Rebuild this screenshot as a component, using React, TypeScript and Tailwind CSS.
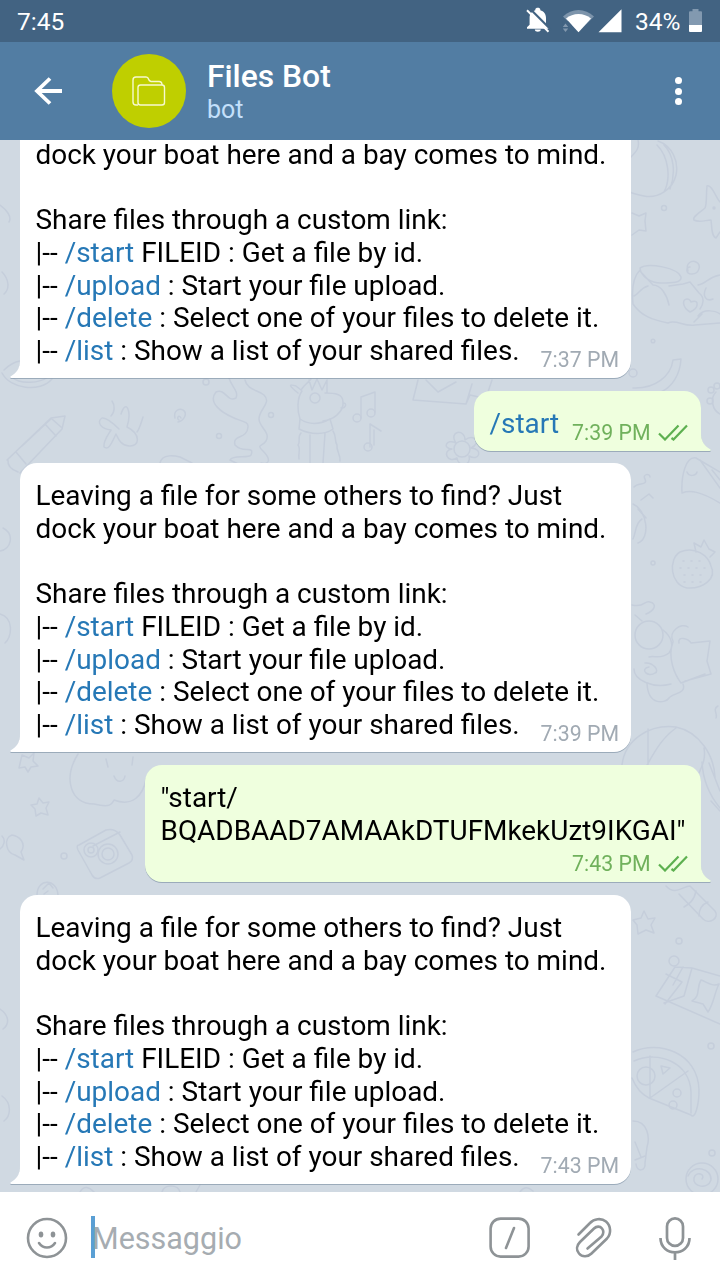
import type { ReactNode } from 'react';

function StatusBar() {
  return (
    <div className="flex h-[42px] items-center bg-[#426382] pr-[18px] pl-[17px] text-[24.5px] leading-none text-white">
      <span className="mt-[3px]">7:45</span>
      <div className="ml-auto flex items-center">
        <svg width="170" height="42" viewBox="525 0 170 42" className="-mr-[60px] shrink-0">
          <path d="M527 28.8v-1.6l2.6-2.5V18c0-4 2.2-7 5.7-7.8v-.8c0-2.200 5-2.200 5 0v.8c3.500.8 5.700 3.800 5.700 7.800v6.700l2.600 2.500v1.600z" fill="#fff" />
          <path d="M534.800 29.600h6c0 3-6 3-6 0z" fill="#fff" />
          <path d="M529.500 8.300l21.500 21.500" stroke="#426382" strokeWidth="2.200" />
          <path d="M527 10.200l21.500 21.500" stroke="#fff" strokeWidth="2" />
          <path d="M563 16.500c8.500-8.700 22.300-8.700 31 0L578.500 32z" fill="#7d94ab" />
          <path d="M563 21l7.500 0 4 11h-12z" fill="#426382" />
          <path d="M566 18.500c7-6 18-6 25 0L578.500 32.200z" fill="#fff" />
          <path d="M562.800 27l2.700-3.500 2.700 3.500zM562.800 28.600l2.700 3.500 2.700-3.500z" fill="#8298ae" />
          <path d="M598.500 32.300L621.500 9.300v23z" fill="#fff" />
        </svg>
        <span className="mt-[3px] mr-[9px] w-[45px]">34%</span>
        <svg width="13" height="23" viewBox="0 0 13 23" className="-mt-[1px]">
          <path d="M3.500 0h6v2.300H12q1 0 1 1V16H0V3.300q0-1 1-1h2.500z" fill="#8299b0" />
          <path d="M0 16h13v6q0 1-1 1H1q-1 0-1-1z" fill="#fff" />
        </svg>
      </div>
    </div>
  );
}

function Header() {
  return (
    <header className="flex h-[98px] items-center bg-[#527da3] pl-[33px]">
      <svg width="30" height="30" viewBox="0 0 30 30" fill="none" stroke="#fff" strokeWidth="3.800">
        <path d="M29 15H4M17 2.500L4 15l13 12.500" />
      </svg>
      <div className="ml-[49px] flex h-[74px] w-[74px] items-center justify-center rounded-full bg-[#bfcf00]">
        <svg width="34" height="30" viewBox="0 0 34 30" fill="none" stroke="#f7f9cf" strokeWidth="1.400" strokeLinejoin="round">
          <path d="M6 29H4q-3 0-3-3V4q0-3 3-3h10q2 0 2.500 2t2.500 2.500h8q3 0 3 3.500" />
          <rect x="6" y="9" width="26.500" height="20" rx="2.500" />
        </svg>
      </div>
      <div className="ml-[21px] flex flex-col">
        <h1 className="text-[31.800px] leading-[38px] font-medium text-white">Files Bot</h1>
        <p className="text-[25px] leading-[30px] text-[#c4e0fb]">bot</p>
      </div>
      <div className="mr-[38px] ml-auto flex flex-col gap-[3.500px]">
        <i className="h-[7px] w-[7px] rounded-full bg-white" />
        <i className="h-[7px] w-[7px] rounded-full bg-white" />
        <i className="h-[7px] w-[7px] rounded-full bg-white" />
      </div>
    </header>
  );
}

function Wallpaper() {
  return (
    <svg className="absolute inset-0" width="720" height="1052" viewBox="0 140 720 1052" fill="none" stroke="#c5cedb" strokeWidth="1.500" strokeLinecap="round" strokeLinejoin="round">
      <path d="M658 141c14 5 21 20 18 34s-18 24-32 21-14-3-17-8M657 145c12 12 14 34 7 47M630 158c6-6 10-10 8-18M664 145c10 10 12 28 6 44" />
      <path d="M707 186c5-2 9 12 13 16M707 186c-1 10 0 18-2 22-6 5-13 9-11 12 5 3 12 0 17 0 1 6 0 16 5 18l4-6" />
      <path d="M632 213l7 3 7-3-1 8 1 10-7-1-7 5" />
      <circle cx="664" cy="208" r="2.500" /><circle cx="714" cy="208" r="1" />
      <path d="M640 268c8-6 38 0 41 9 1 6-10 6-20 6-10 0-20-6-21-15zM640 270c-8 8-8 24-7 34 8 12 20 16 35 19M640 271l13 14c8 0 14 10 16 20M634 296c5-2 6-8 14-10M669 286l14-2 7-2 9 11c5 4 5 10 1 16M698 285c8-1 10-8 22-10M668 323c8-4 16 4 27 2l25-2M706 288c-4 8 0 14 7 11" />
      <path d="M690 312c-8-5-8-13-3-13 3 0 4 3 4 3s7-3 6 3c0 4-7 7-7 7zM698 316c6-8 18-5 22-2M694 322l8-8" />
      <path d="M688 271c-3-8 4-11 8-9 6 3 3 12-4 12s-6-7-2-7" />
      <circle cx="653" cy="341" r="1.800" /><circle cx="633" cy="373" r="4" />
      <path d="M633 388c22 1 38-12 40-28l8-1c-1 16-9 28-20 33M716 392c-6 6-4 18 4 22" />
      <circle cx="711" cy="390" r="3" /><circle cx="710" cy="401" r="3" /><circle cx="717" cy="386" r="3" />
      <path d="M2 373c8 16 38 20 50 6M12 377c8 8 28 6 36 0M4 370c4-4 10-8 16-9" />
      <path d="M7 460l44-42 14-2-3 13-42 44M16 452l10 12M45 424l11 12M52 419l9 8M22 446l30-28M8 460q-1 8 10 12" />
      <path d="M121 414c5-16 11-3 6 13 14 7 13 20 2 19-9-1-11-8-13-12-4 8-7 17-12 13-1-6 4-12 7-17-10-1-15-8-9-12 5-1 12 6 17 11M112 401c3 4 3 11-1 15M143 417c-2 6-3 11-6 15" />
      <path d="M175 418c-2-8 5-10 8-8 5 3 1 11-5 12M181 418c-2-4-5 0-2 2M160 463c2-10 16-7 20-6l12 6" />
      <path d="M229 378c2 8 10 13 7 20-9 5-10-10-20-6-9 11 7 21 16 25 7 4 17 4 16 10-1 13-16 7-13 18 8 9 20 0 16 10-3 4-18-1-21 5l8 4M245 380c2 10 13 10 19 15 8 8-5 14-5 24 0 8 12 13 7 22-4 6-10 3-3 10 8 8 7 14-2 12" />
      <circle cx="206" cy="382" r="3" /><circle cx="219" cy="436" r="2.500" /><circle cx="271" cy="415" r="2.500" />
      <path d="M298 393c-10-8-9-9-2-7l5 4c4-6 8-8 10-11M302 391c-5 7-5 20-2 28M309 380l3 10 5-11 5 11 5-10v12M325 393c10 0 18 1 18 9 1 10-10 18-20 19M343 403c5 0 2 6-2 5M300 419c9 6 19 6 30 0l3 10c-8 6-22 6-34 0zM301 433c-4 4 0 8-3 12 3 4 0 8 1 14M333 431c4 6 1 9 4 14-1 6 4 10 3 16M310 435v28M325 433l-2 30" />
      <circle cx="315" cy="398" r="5" /><path d="M361 397l14-5v20M361 397v21" /><circle cx="357" cy="418" r="4" /><circle cx="371" cy="413" r="4" /><path d="M370 424v23M370 424l11 7M374 430v15" /><circle cx="368" cy="447" r="4" />
      <path d="M418 380l-5 20 53 4 4-9 22 5M426 380l12 12 18-10M466 404l6-20M492 380l-6 18" />
      <circle cx="462" cy="449" r="8" /><path d="M456 443c-8-12 9-15 9-3 9-7 17 3 6 8 13 1 8 14-2 8 3 10-11 12-12 2-10 6-15-8-5-9-10 0-6-11 4-6" />
      <path d="M682 493c-1-18 4-37 14-35l24 14M682 493c8-3 18-2 38 10M687 472c2 5 9 4 10 0M700 460l20 28M712 470l8 10" />
      <path d="M634 487c4-5 14-1 11-8-3-5 5-6 5-2M641 500l8-6 4 4M633 504c14 6 18 34 5 39M638 509l8 9M642 519c-7 4-6 14-9 20" />
      <circle cx="653" cy="563" r="2" />
      <path d="M680 552c-12 7-10 33 7 36 17 1 30-10 24-22-3-11-16-20-31-14zM696 552l-2-9 7 4 3-7 5 9 6 3-5 5" />
      <g strokeDasharray="1 7"><path d="M683 561h20M680 568h28M684 575h24M684 582h18" /></g>
      <path d="M632 605c13 3 12-5 18-3 8 2 4 9-4 12M635 615l7 6" />
      <circle cx="649" cy="635" r="14" />
      <path d="M663 630c9 7 11 16 6 23-9 7-15 2-20 4M673 641c-5-9 8-19 15-14M673 642c-6 16 2 33 8 41l24-9M679 643c-2-8 10-4 12 0l19-2-3 20 4 13-26 7M671 684c-18 5-37-4-37-15M645 663c8-1 15 8 10 10-7 5-16-4-6-6" />
      <path d="M647 683c1 24 19 20 22 15s18-4 14-14" />
      <path d="M622 765c3-26 28-41 54-38 24 5 38 29 39 50M648 729v38M676 728c-14 10-21 23-29 37M704 748c2 11-2 18-5 25M718 706c-6 3 0 8-2 12" />
      <path d="M78 754c-15 24-8 50 16 50 17 4 18 0 20-4 18 7 29-4 32-21M106 759l2 8M133 757l-1 8M114 776c3 8 10 6 11 0" />
      <path d="M22 755l7 3 5-5-1 8 5 5-7 1-3 5-3-5-6 1z" />
      <path d="M39 798l4 5 6-1-3 6 2 7-7-2-5 3-1-7-4-4 6-1z" />
      <path d="M12 835c-9 3-6 18 3 20l9 5-3-8c6-9-2-16-9-17z" />
      <circle cx="64" cy="856" r="3" />
      <path d="M79 845l27-15q9-2 14 5l12 20q2 5-3 8l-29 15q-5 2-8-3l-14-25q-2-5 1-5zM93 846l27-14" />
      <circle cx="91" cy="850" r="7" /><circle cx="108" cy="854" r="10" /><circle cx="108" cy="854" r="6" /><circle cx="91" cy="850" r="3" />
      <path d="M37 895c0-17 20-17 21 0M43 889l6-6 4 5M44 894l4-3" />
      <path d="M709 763l11 28M711 801l9 10M702 762c1 20 8 34 18 46" />
      <path d="M666 886c9 10 17 0 24 0l25 25c5 7-6 14-12 8l-24-25" /><path d="M696 891c-2 10-7 13-12 16M708 902c-5 2-9 6-9 14" />
      <path d="M644 911l4 8 7-1-4 7 3 8-8-3-8 4-1-9-4-5 8-2z" />
      <circle cx="679" cy="941" r="3" /><circle cx="674" cy="961" r="5" /><circle cx="711" cy="1046" r="3" />
      <path d="M675 967l17 1 28 8M675 967l-19 29 64 28M666 974l16 8-17 22M692 968l-8 28-20 7M683 967l-10 18M701 980c-5 8 0 16-9 21l11 3 5 8c6-9 6-18 11-28-7 3-12-2-18-4z" />
      <path d="M633 1052c25-12 65 0 66 38 0 15-4 30-8 25l-42-17c-6-3-13-10-17-20M634 1061c25-11 56 2 57 31v21M650 1056v42l38-27" />
      <circle cx="646" cy="1076" r="9" /><path d="M661 1066l9 2-7 6z" /><circle cx="677" cy="1093" r="4" /><circle cx="673" cy="1105" r="4" />
      <path d="M633 1121c15 0 17 17 14 26l-2 16c1 8-8 10-9 1M635 1142l6 15M635 1160l10-4" />
      <circle cx="702" cy="1179" r="16" /><path d="M702 1179c4-5-6-8-8-1-2 9 14 12 17 2 1-12-18-16-23-4" /><circle cx="712" cy="1153" r="3" />
      <path d="M0 205c7 5 12 12 9 17M2 272c7 7 8 17 2 22M3 528c12 6 8 22-3 23M0 614c14 4 12 22 5 29M2 836c4 4 2 10-2 13M0 1009c9 6 10 15 3 20M2 1096c10 7 9 20 2 25" />
      <path d="M80 1192c4-7 9-5 14 0M162 1192c2-8 16-8 18 0M196 1192l4-7M520 1192c4-6 8-5 13-1" />
    </svg>
  );
}

function Tail({ mine = false }: { mine?: boolean }) {
  return mine ? (
    <svg className="absolute -right-[10px] bottom-0" width="12" height="18" viewBox="0 0 12 18">
      <path d="M0 0h2c0 8 3 13 9.500 16.500q.8 1.500-1 1.500H0z" fill="#efffde" />
    </svg>
  ) : (
    <svg className="absolute bottom-0 -left-[10px]" width="12" height="18" viewBox="0 0 12 18">
      <path d="M12 0h-2c0 8-3 13-9.500 16.500q-.8 1.500 1 1.500H12z" fill="#fff" />
    </svg>
  );
}

function Bubble({ mine = false, className, children }: { mine?: boolean; className: string; children: ReactNode }) {
  return (
    <article
      className={
        (mine
          ? 'relative mr-[19.500px] self-end rounded-[17px] rounded-br-none bg-[#efffde] '
          : 'relative ml-[19.500px] w-[611.500px] self-start rounded-[17px] rounded-bl-none bg-white ') +
        'shrink-0 drop-shadow-[0_1.500px_0.500px_rgba(120,140,160,0.600)] text-[27.930px] leading-[32.700px] text-black ' +
        className
      }
    >
      {children}
      <Tail mine={mine} />
    </article>
  );
}

const Cmd = ({ children }: { children: string }) => <span className="text-[#2678b6]">{children}</span>;

function Checks() {
  return (
    <svg width="30" height="17" viewBox="0 0 30 17" fill="none" stroke="#5db050" strokeWidth="2.200">
      <path d="M1 9.500l6 6L20.500 1.500M13.500 14l2 1.500L29 1.500" />
    </svg>
  );
}

function HelpMessage({ time, className, continued = false }: { time: string; className: string; continued?: boolean }) {
  return (
    <Bubble
      className={
        (continued ? 'h-[238px] rounded-t-none ' : 'h-[289px] pt-[17px] ') + 'pl-[16px] whitespace-nowrap ' + className
      }
    >
      {!continued && <p>Leaving a file for some others to find? Just</p>}
      <p className={continued ? '-mt-[1.300px]' : ''}>dock your boat here and a bay comes to mind.</p>
      <p>&nbsp;</p>
      <p>Share files through a custom link:</p>
      <p>|-- <Cmd>/start</Cmd> FILEID : Get a file by id.</p>
      <p>|-- <Cmd>/upload</Cmd> : Start your file upload.</p>
      <p>|-- <Cmd>/delete</Cmd> : Select one of your files to delete it.</p>
      <div className="flex justify-between pr-[12px]">
        <p>|-- <Cmd>/list</Cmd> : Show a list of your shared files.</p>
        <time className="mt-[9px] text-[21.300px] text-[#a1aab3]">{time}</time>
      </div>
    </Bubble>
  );
}

function Composer() {
  return (
    <footer className="flex h-[88px] items-center bg-white pr-[29px] pl-[26px] text-[#8e9396]">
      <svg width="42" height="42" viewBox="0 0 42 42" fill="none" stroke="currentColor" strokeWidth="2.600" strokeLinecap="round" className="mt-[3px]">
        <circle cx="21" cy="21" r="19" />
        <path d="M13 26c4 6 12 6 16 0" />
        <ellipse cx="15" cy="17.500" rx="2.300" ry="3" fill="currentColor" stroke="none" />
        <ellipse cx="27" cy="17.500" rx="2.300" ry="3" fill="currentColor" stroke="none" />
      </svg>
      <i className="mt-[2px] ml-[23px] h-[42px] w-[4px] bg-[#5a9fd4]" />
      <span className="mt-[5px] -ml-[3px] text-[30.500px] leading-[34px] text-[#a6acb1]">Messaggio</span>
      <div className="mt-[3px] ml-auto flex items-center">
        <svg width="42" height="42" viewBox="0 0 42 42" fill="none" stroke="currentColor" strokeWidth="2.600" strokeLinecap="round">
          <rect x="1.600" y="1.600" width="38" height="38" rx="10" />
          <path d="M25 11L17 31" />
        </svg>
        <svg width="42" height="42" viewBox="0 0 42 42" fill="none" stroke="currentColor" strokeWidth="2.600" strokeLinecap="round" className="ml-[43px]">
          <path d="M4.500 17.500L16 6C20 1.800 27 .5 32 4.500C37 9 37.500 16.500 33 21.500L17.500 36.500C13.500 40.500 8 40 5 36.500C2 33 2.500 28.500 6 25L20 11.500C22.500 9 26 9 28 11.500C30 14 29.500 17 27.500 19.500L13.500 31.500" />
        </svg>
        <svg width="32" height="44" viewBox="0 0 32 44" fill="none" stroke="currentColor" strokeWidth="2.700" className="ml-[43px]">
          <rect x="8" y="2.400" width="16" height="27.500" rx="8" />
          <path d="M1.500 22c0 19 29 19 29 0M16 36v8" />
        </svg>
      </div>
    </footer>
  );
}

export default function App() {
  return (
    <div className="flex h-[1280px] w-[720px] flex-col overflow-hidden font-['Roboto',sans-serif]">
      <StatusBar />
      <Header />
      <main className="relative flex h-[1052px] flex-col overflow-hidden bg-[#d0d9e2]">
        <Wallpaper />
        <HelpMessage continued time="7:37 PM" className="mt-0" />
        <Bubble mine className="mt-[13px] flex h-[60px] w-[226.500px] pt-[17px] pl-[15.500px]">
          <Cmd>/start</Cmd>
          <div className="mt-[9px] ml-auto flex gap-[7px] pr-[13px] text-[21.300px] text-[#70b15c]">
            <time>7:39 PM</time>
            <span className="mt-[7px]"><Checks /></span>
          </div>
        </Bubble>
        <HelpMessage time="7:39 PM" className="mt-[12px]" />
        <Bubble mine className="mt-[13px] h-[117px] w-[555.500px] pt-[17px] pl-[15.500px]">
          <p>"start/</p>
          <p className="whitespace-nowrap">BQADBAAD7AMAAkDTUFMkekUzt9IKGAI"</p>
          <div className="mt-[1px] flex justify-end gap-[7px] pr-[13px] text-[21.300px] text-[#70b15c]">
            <time>7:43 PM</time>
            <span className="mt-[7px]"><Checks /></span>
          </div>
        </Bubble>
        <HelpMessage time="7:43 PM" className="mt-[13px]" />
      </main>
      <Composer />
    </div>
  );
}
